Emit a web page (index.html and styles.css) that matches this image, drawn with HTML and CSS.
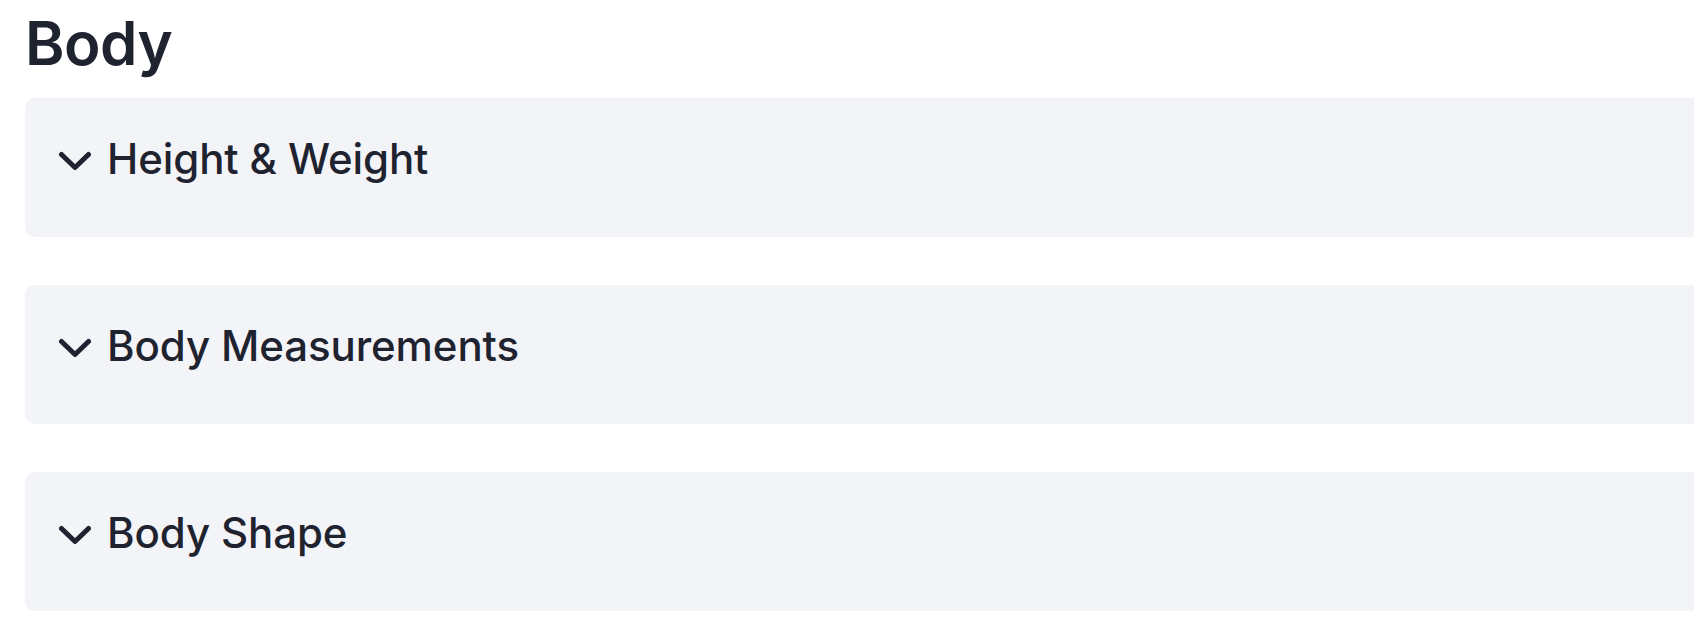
FILE: index.html
```html
<!DOCTYPE html>
<html>
<head>
    <title>Body</title>
    <meta name="viewport" content="width=device-width, initial-scale=1.0">
    <link rel="stylesheet" href="styles.css">
</head>
<body>
    <div class="page">
        <h1 class="page-title">Body</h1>
        <div class="section">
            <div class="section-header">
                <svg class="chevron" viewBox="0 0 34 22" width="34" height="22"><polyline points="3.5,3.5 17,16.5 30.5,3.5"/></svg>
                <span class="section-title">Height &amp; Weight</span>
            </div>
        </div>
        <div class="section">
            <div class="section-header">
                <svg class="chevron" viewBox="0 0 34 22" width="34" height="22"><polyline points="3.5,3.5 17,16.5 30.5,3.5"/></svg>
                <span class="section-title">Body Measurements</span>
            </div>
        </div>
        <div class="section">
            <div class="section-header">
                <svg class="chevron" viewBox="0 0 34 22" width="34" height="22"><polyline points="3.5,3.5 17,16.5 30.5,3.5"/></svg>
                <span class="section-title">Body Shape</span>
            </div>
        </div>
    </div>
</body>
</html>
```

FILE: styles.css
```css
body {
    font-family: Inter, "Noto Sans", sans-serif;
    background-color: #fff;
    color: #1f2330;
    margin: 0;
    padding: 0;
    overflow: hidden;
}
.page {
    padding: 13px 0 0 25px;
}
.page-title {
    font-size: 60px;
    font-weight: 600;
    line-height: 60px;
    margin: 0 0 25px 0;
    letter-spacing: -0.5px;
}
.section {
    background-color: #f3f4f7;
    border-radius: 10px;
    height: 139px;
    margin-right: -30px;
    margin-bottom: 48px;
    box-sizing: border-box;
    padding: 36px 0 0 33px;
}
.section-header {
    display: flex;
    align-items: flex-start;
    gap: 15px;
}
.chevron {
    margin-top: 17px;
    fill: none;
    stroke: #1f2330;
    stroke-width: 5;
    stroke-linecap: round;
    stroke-linejoin: round;
}
.section-title {
    font-size: 42px;
    font-weight: 500;
    line-height: 50px;
    letter-spacing: -0.1px;
}
```
